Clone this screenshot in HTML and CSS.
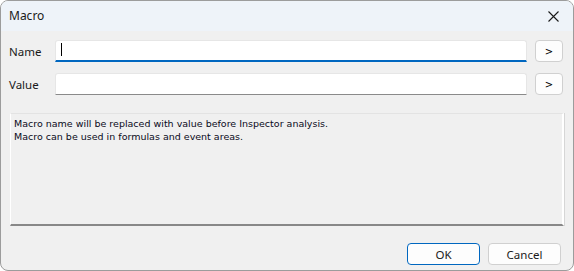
FILE: index.html
```html
<!DOCTYPE html>
<html>
<head>
<meta charset="utf-8">
<link rel="stylesheet" href="styles.css">
</head>
<body>
<div class="window">
  <div class="titlebar">
    <span class="title">Macro</span>
    <span class="close">
      <svg width="11" height="11" viewBox="0 0 11 11"><path d="M0.5 0.5 L10.5 10.5 M10.5 0.5 L0.5 10.5" stroke="#1a1a1a" stroke-width="1.1" fill="none"/></svg>
    </span>
  </div>
  <div class="content">
    <div class="row row-name">
      <span class="label">Name</span>
      <div class="input focused"><span class="caret"></span></div>
      <button class="small-btn">&gt;</button>
    </div>
    <div class="row row-value">
      <span class="label">Value</span>
      <div class="input"></div>
      <button class="small-btn">&gt;</button>
    </div>
    <div class="info">
      <div>Macro name will be replaced with value before Inspector analysis.</div>
      <div>Macro can be used in formulas and event areas.</div>
    </div>
    <div class="actions">
      <button class="btn primary">OK</button>
      <button class="btn">Cancel</button>
    </div>
  </div>
</div>
</body>
</html>
```
FILE: styles.css
```css
html, body {
  margin: 0;
  padding: 0;
  background: #ffffff;
}
.window {
  box-sizing: border-box;
  width: 574px;
  height: 271px;
  border: 1px solid #9c9c9c;
  border-radius: 8px;
  background: #f0f0f0;
  overflow: hidden;
  display: flex;
  flex-direction: column;
  font-family: "Noto Sans", "Open Sans", sans-serif;
  font-size: 12px;
  color: #1a1a1a;
}
.titlebar {
  height: 30px;
  background: #eef3f9;
  display: flex;
  align-items: center;
  justify-content: space-between;
  padding: 0 14px 0 8px;
}
.title {
  font-size: 12px;
  color: #1a1a1a;
  margin-top: -1px;
}
.close {
  display: flex;
  width: 11px;
  height: 11px;
}
.content {
  flex: 1;
  display: flex;
  flex-direction: column;
  padding: 9px 10px 0 8px;
}
.row {
  display: flex;
  align-items: center;
  height: 22px;
}
.row-value {
  margin-top: 11px;
}
.label {
  width: 46px;
  font-size: 11.5px;
  color: #1a1a1a;
}
.input {
  box-sizing: border-box;
  width: 473px;
  height: 22px;
  background: #ffffff;
  border: 1px solid #e6e6e6;
  border-bottom: 1px solid #8a8a8a;
  border-radius: 3px 3px 0 0;
  position: relative;
}
.input.focused {
  border-bottom: 2px solid #0067c0;
}
.caret {
  position: absolute;
  left: 5px;
  top: 2px;
  width: 1px;
  height: 13px;
  background: #000;
}
.small-btn {
  box-sizing: border-box;
  margin-left: 8px;
  width: 28px;
  height: 22px;
  background: #fdfdfd;
  border: 1px solid #d0d0d0;
  border-radius: 4px;
  font-family: "DejaVu Sans", sans-serif;
  font-size: 10px;
  color: #000;
  padding: 0;
  display: flex;
  align-items: center;
  justify-content: center;
}
.info {
  box-sizing: border-box;
  margin-top: 18px;
  margin-left: 1px;
  width: 554px;
  height: 113px;
  border-top: 1px solid #e3e3e3;
  border-left: 1px solid #ffffff;
  border-right: 2px solid #ffffff;
  border-bottom: 2px solid #888888;
  box-shadow: 1px 0 0 #d6d6d6;
  padding: 3px 3px;
  font-family: "DejaVu Sans", sans-serif;
  font-size: 9.5px;
  line-height: 13px;
  color: #0a0a1a;
}
.actions {
  display: flex;
  justify-content: flex-end;
  gap: 8px;
  margin-top: 17px;
  padding-right: 2px;
}
.btn {
  box-sizing: border-box;
  width: 73px;
  height: 22px;
  background: #fdfdfd;
  border: 1px solid #d0d0d0;
  border-radius: 4px;
  font-family: "Noto Sans", "Open Sans", sans-serif;
  font-size: 11.5px;
  color: #1a1a1a;
  padding: 0;
}
.btn.primary {
  border: 1px solid #0067c0;
}
```
